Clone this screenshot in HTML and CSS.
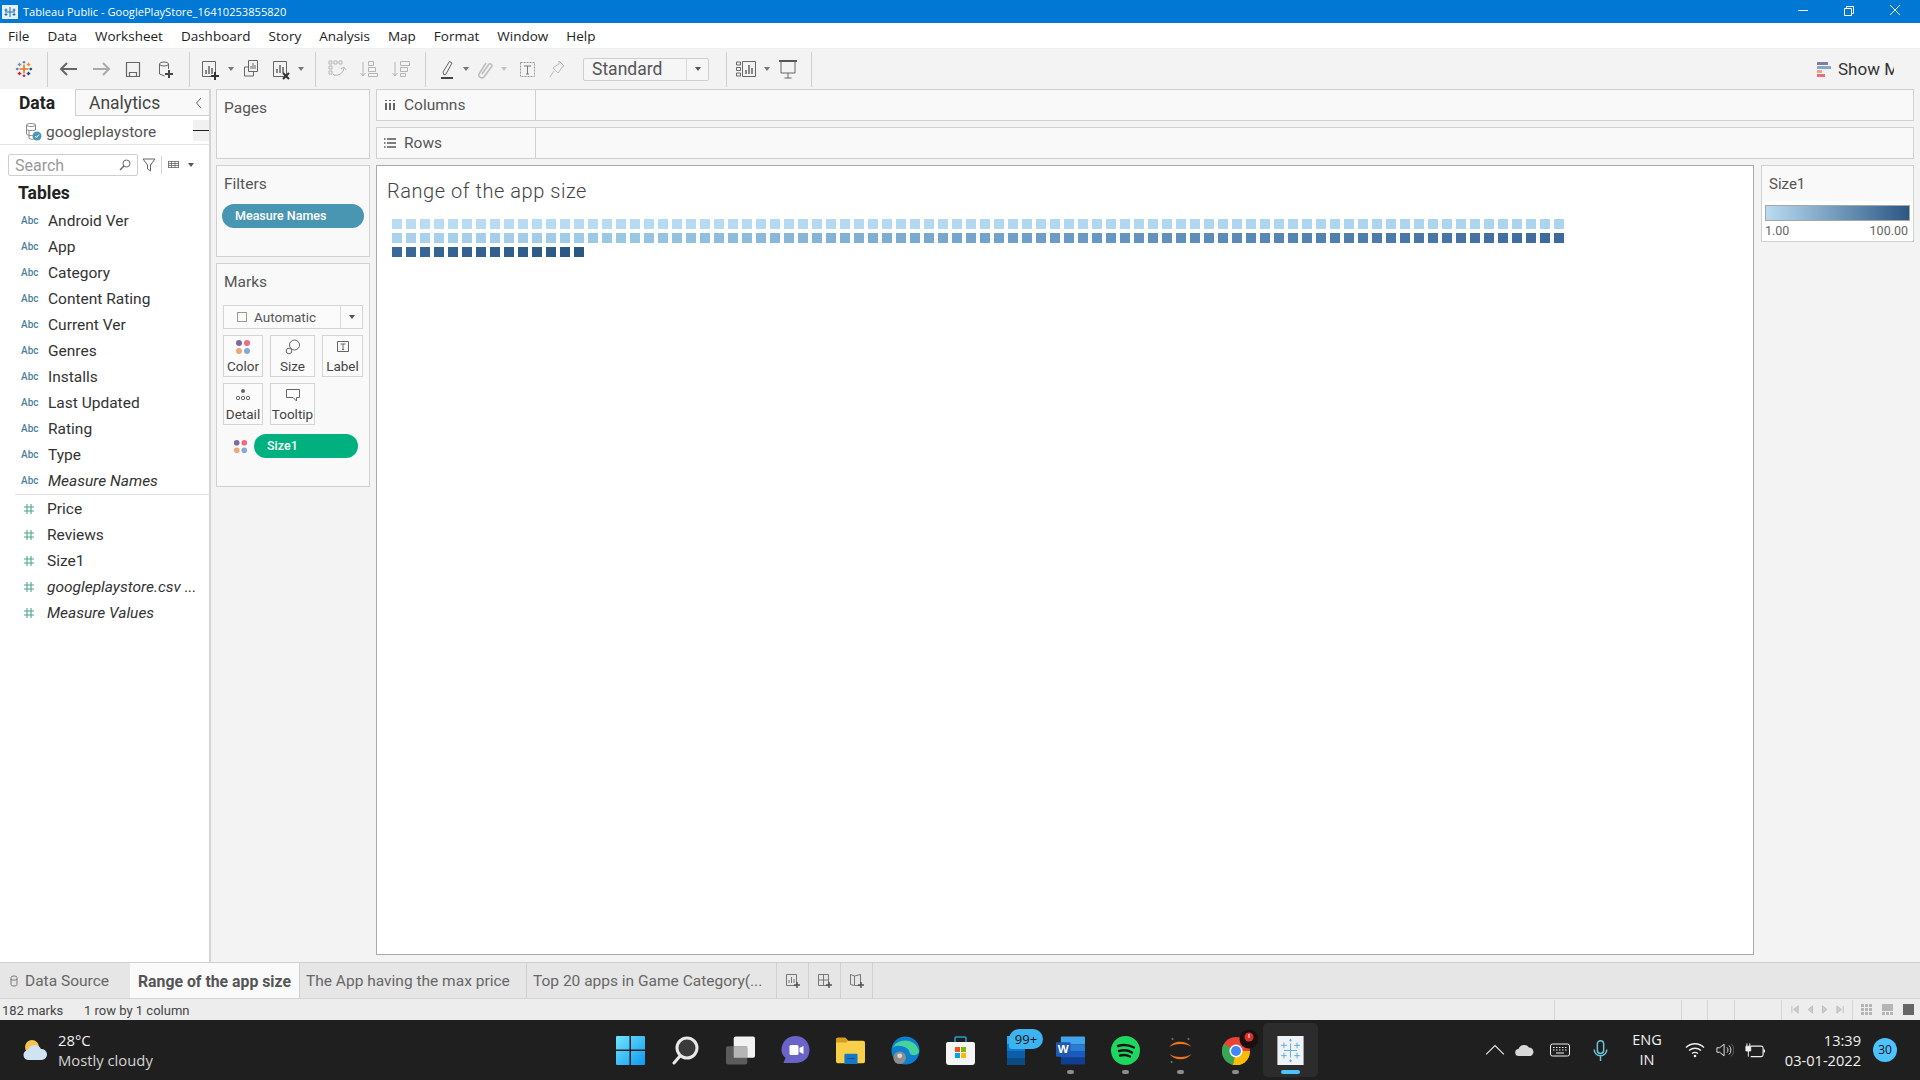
FILE: index.html
```html
<!DOCTYPE html>
<html lang="en">
<head>
    <meta charset="UTF-8">
    <title>Tableau Public - GooglePlayStore_16410253855820</title>
    <link rel="stylesheet" href="styles.css">
</head>
<body>
<svg class="defs" width="0" height="0">
    <symbol id="dots" viewBox="0 0 16 16">
        <circle cx="4" cy="4" r="3" fill="#7b6a9c"/><circle cx="12" cy="4" r="3" fill="#ee6a7c"/>
        <circle cx="4" cy="12" r="3" fill="#eda678"/><circle cx="12" cy="12" r="3" fill="#86a9d4"/>
    </symbol>
    <symbol id="num" viewBox="0 0 12 12">
        <path d="M4 1v10M8 1v10M1 4h10M1 8h10" stroke="#4da58a" stroke-width="1.1" fill="none"/>
    </symbol>
    <symbol id="logo" viewBox="0 0 20 20">
        <g fill="none" stroke-width="1.4">
            <path d="M10 5v10M5 10h10" stroke="#e8762c" stroke-width="1.8"/>
            <path d="M10 1v3M8.5 2.5h3" stroke="#5b879b"/>
            <path d="M10 16v3M8.5 17.5h3" stroke="#c72037"/>
            <path d="M2.5 8.5v3M1 10h3" stroke="#59879b"/>
            <path d="M17.5 8.5v3M16 10h3" stroke="#1f447a"/>
            <path d="M5 3v4M3 5h4" stroke="#7099a6"/>
            <path d="M15 3v4M13 5h4" stroke="#eb912b"/>
            <path d="M5 13v4M3 15h4" stroke="#c72037"/>
            <path d="M15 13v4M13 15h4" stroke="#1f447a"/>
        </g>
    </symbol>
</svg>

<div class="app">
    <header class="titlebar">
        <svg class="title-icon" viewBox="0 0 16 14"><rect width="16" height="14" fill="#e8f1fa"/><path d="M8 2v10M3 7h10M4 3.5v3M2.5 5h3M12 3.5v3M10.500 5h3M4 8v3M2.500 9.500h3M12 8v3M10.500 9.500h3" stroke="#1a6fb8" fill="none"/></svg>
        <span class="title-text">Tableau Public - GooglePlayStore_16410253855820</span>
        <div class="win-controls">
            <svg viewBox="0 0 46 23"><path d="M18 10.500h10" stroke="#fff" fill="none"/></svg>
            <svg viewBox="0 0 46 23"><path d="M18.500 8.500h7v7h-7zM20.500 8.500v-2h7v7h-2" stroke="#fff" fill="none"/></svg>
            <svg viewBox="0 0 46 23"><path d="M18 5l10 10M28 5L18 15" stroke="#fff" fill="none"/></svg>
        </div>
    </header>

    <nav class="menubar">
        <span>File</span><span>Data</span><span>Worksheet</span><span>Dashboard</span><span>Story</span><span>Analysis</span><span>Map</span><span>Format</span><span>Window</span><span>Help</span>
    </nav>

    <div class="toolbar">
        <div class="tool-group first">
            <svg class="tool" viewBox="0 0 32 20"><use href="#logo" x="7" y="1" width="18" height="18"/></svg>
        </div>
        <div class="tool-group g2">
            <svg class="tool" viewBox="0 0 32 20"><path d="M8 10h16M14 4l-6 6 6 6" stroke="#666" stroke-width="2" fill="none"/></svg>
            <svg class="tool" viewBox="0 0 32 20"><path d="M8 10h16M18 4l6 6-6 6" stroke="#aaa" stroke-width="2" fill="none"/></svg>
            <svg class="tool" viewBox="0 0 32 20"><path d="M9.500 3.500h13v14h-13zM12.500 17.500v-4h7v4" stroke="#666" stroke-width="1.200" fill="none"/></svg>
            <svg class="tool" viewBox="0 0 32 20"><path d="M10.500 5v10l5 2M10.500 5a4.500 2 0 0 1 9 0v5M10.500 5a4.500 2 0 0 0 9 0" stroke="#666" fill="none"/><path d="M20 11v8M16 15h8" stroke="#444" stroke-width="2" fill="none"/></svg>
        </div>
        <div class="tool-group g3">
            <svg class="tool" viewBox="0 0 32 20"><path d="M8.500 2.500h13v15h-13z" stroke="#666" fill="none"/><path d="M12 15v-4M15 15V7M18 15V9" stroke="#666" stroke-width="1.500"/><path d="M21 13v8M17 17h8" stroke="#333" stroke-width="2"/></svg>
            <span class="caret"></span>
            <svg class="tool n" viewBox="0 0 30 20"><path d="M12.500 1.500h9v11h-9zM8.500 8h4M8.500 8v9h9v-4" stroke="#666" fill="none"/><path d="M15 10V7M17 10V4M19 10V6" stroke="#666"/></svg>
            <svg class="tool n" viewBox="0 0 30 20"><path d="M7.500 2.500h13v15h-13z" stroke="#666" fill="none"/><path d="M11 14v-4M14 14V6M17 14V8" stroke="#666" stroke-width="1.500"/><path d="M17 14l6 6M23 14l-6 6" stroke="#333" stroke-width="2"/></svg>
            <span class="caret"></span>
        </div>
        <div class="tool-group g4 off">
            <svg class="tool" viewBox="0 0 32 20"><path d="M8 2h3v3H8zM13 2h3v3h-3zM18 2h3v3h-3zM8 7h3v3H8zM8 12h3v3H8zM13 16a8 8 0 0 0 10-7M20 10l3-2 2 3M12 15l2 2" stroke="#b5b5b5" fill="none"/></svg>
            <svg class="tool" viewBox="0 0 32 20"><path d="M10 3v14M7.500 14l2.500 3 2.500-3M15.500 2.500h5v4h-5zM15.500 8.500h7v4h-7zM15.500 14.500h9v3h-9z" stroke="#b5b5b5" fill="none"/></svg>
            <svg class="tool" viewBox="0 0 32 20"><path d="M10 3v14M7.500 14l2.500 3 2.500-3M15.500 2.500h9v4h-9zM15.500 8.500h7v4h-7zM15.500 14.500h5v3h-5z" stroke="#b5b5b5" fill="none"/></svg>
        </div>
        <div class="tool-group g5">
            <svg class="tool s" viewBox="0 0 28 22"><path d="M10 14l1 3 2-1 6-11-2.500-1.500z" stroke="#666" fill="none"/><path d="M8 20h12" stroke="#444" stroke-width="2"/></svg>
            <span class="caret"></span>
            <svg class="tool s" viewBox="0 0 28 22"><path d="M11 16l7-10a2 2 0 0 1 3 2l-8 11a3 3 0 0 1-5-3l7-11" stroke="#bbb" stroke-width="1.500" fill="none"/></svg>
            <span class="caret light"></span>
            <svg class="tool n text-tool" viewBox="0 0 30 20"><path d="M8.500 3.500h14v14h-14z" stroke="#999" stroke-dasharray="2 1" fill="none"/><path d="M12 7h7M15.500 7v8M14 15h3" stroke="#777" fill="none"/></svg>
            <svg class="tool n" viewBox="0 0 30 20"><path d="M17 2l5 5-2 1-3 5-1 1-5-5 1-1 5-3zM12 12l-4 6" stroke="#bbb" fill="none"/></svg>
            <div class="fit-select"><span>Standard</span><i class="fit-arrow"><b class="caret dark"></b></i></div>
        </div>
        <div class="tool-group g6">
            <svg class="tool s" viewBox="0 0 28 20"><path d="M2.500 3h4v3h-4zM2.500 8.500h4v3h-4zM2.500 14h4v3h-4zM8.500 2.500h13v15h-13z" stroke="#666" fill="none"/><path d="M12 15v-4M15 15V6M18 15V9" stroke="#666" stroke-width="1.500"/></svg>
            <span class="caret"></span>
            <svg class="tool" viewBox="0 0 32 22"><path d="M7 3h18" stroke="#555" stroke-width="2"/><path d="M9 3v12h14V3M16 15v5M12.500 20h7" stroke="#666" fill="none"/></svg>
        </div>
        <div class="show-me">
            <svg viewBox="0 0 14 15"><rect width="11" height="3" fill="#8b789f"/><rect y="4" width="14" height="3" fill="#84a6cf"/><rect y="8" width="5" height="3" fill="#eda678"/><rect y="12" width="8" height="3" fill="#ee6a7c"/></svg>
            <span class="show-text">Show Me</span>
        </div>
    </div>

    <main class="workspace">
        <aside class="data-pane">
            <div class="pane-tabs">
                <div class="pane-tab active">Data</div>
                <div class="pane-tab">Analytics<svg class="collapse" viewBox="0 0 8 12"><path d="M6 1L1.500 6 6 11" stroke="#666" fill="none"/></svg></div>
            </div>
            <div class="source-row">
                <svg class="source-icon" viewBox="0 0 18 20"><path d="M2.500 3v9c0 1.500 7 2 8 1M2.500 3c0-2 9-2 9 0s-9 2-9 0zM2.500 7c0 1.500 5 2 9 1M11.500 3v5M5 8v8c1 1.500 4 1.500 5 1" stroke="#888" fill="none"/><circle cx="13" cy="14" r="4.500" fill="#4b97b5"/><path d="M11 14l1.500 1.500 2.500-3" stroke="#fff" fill="none"/></svg>
                <span>googleplaystore</span>
                <span class="source-dash"><i></i></span>
            </div>
            <div class="search-row">
                <div class="search-box"><span>Search</span><svg viewBox="0 0 12 12"><circle cx="7.500" cy="4.500" r="3.500" stroke="#666" fill="none"/><path d="M5 7l-4 4" stroke="#666" stroke-width="1.500"/></svg></div>
                <svg class="filter-icon" viewBox="0 0 14 14"><path d="M1 1h12L8.500 7v6l-3-2V7z" stroke="#666" fill="none"/></svg>
                <i class="search-sep"></i>
                <svg class="list-icon" viewBox="0 0 11 10"><path d="M0 1.500h11M0 3.500h11M0 5.500h11M0 7.500h11M.500 1v7M3.500 1v7M7 1v7M10.500 1v7" stroke="#666" stroke-width=".8" fill="none"/></svg>
                <span class="caret dark"></span>
            </div>
            <h3 class="tables-head">Tables</h3>
            <ul class="field-list">
                <li><span class="abc">Abc</span>Android Ver</li>
                <li><span class="abc">Abc</span>App</li>
                <li><span class="abc">Abc</span>Category</li>
                <li><span class="abc">Abc</span>Content Rating</li>
                <li><span class="abc">Abc</span>Current Ver</li>
                <li><span class="abc">Abc</span>Genres</li>
                <li><span class="abc">Abc</span>Installs</li>
                <li><span class="abc">Abc</span>Last Updated</li>
                <li><span class="abc">Abc</span>Rating</li>
                <li><span class="abc">Abc</span>Type</li>
                <li class="gen"><span class="abc">Abc</span>Measure Names</li>
            </ul>
            <ul class="field-list measures">
                <li><svg class="hash"><use href="#num"/></svg>Price</li>
                <li><svg class="hash"><use href="#num"/></svg>Reviews</li>
                <li><svg class="hash"><use href="#num"/></svg>Size1</li>
                <li class="gen"><svg class="hash"><use href="#num"/></svg>googleplaystore.csv ...</li>
                <li class="gen"><svg class="hash"><use href="#num"/></svg>Measure Values</li>
            </ul>
        </aside>

        <section class="cards">
            <div class="card pages"><div class="card-title">Pages</div></div>
            <div class="card filters">
                <div class="card-title">Filters</div>
                <div class="pill pill-blue">Measure Names</div>
            </div>
            <div class="card marks-card">
                <div class="card-title">Marks</div>
                <div class="mark-type">
                    <i class="check"></i><span>Automatic</span>
                    <i class="type-arrow"><b class="caret dark"></b></i>
                </div>
                <div class="mark-btns">
                    <div class="mark-btn w40"><svg viewBox="0 0 16 16"><use href="#dots"/></svg>Color</div>
                    <div class="mark-btn w45"><svg viewBox="0 0 16 16"><circle cx="9.500" cy="6" r="5" stroke="#666" fill="none"/><circle cx="4" cy="12" r="2.800" stroke="#666" fill="#f9f9f9"/></svg>Size</div>
                    <div class="mark-btn w41"><svg viewBox="0 0 16 16"><path d="M2.500 2.500h11v10h-11z" stroke="#666" fill="none"/><path d="M5.500 5h5M8 5v5.500M7 10.500h2" stroke="#666" fill="none"/></svg>Label</div>
                </div>
                <div class="mark-btns">
                    <div class="mark-btn w40"><svg viewBox="0 0 16 16"><circle cx="8" cy="4" r="2" fill="#666"/><circle cx="3" cy="11" r="1.700" stroke="#666" fill="none"/><circle cx="8" cy="11" r="1.700" stroke="#666" fill="none"/><circle cx="13" cy="11" r="1.700" stroke="#666" fill="none"/></svg>Detail</div>
                    <div class="mark-btn w45"><svg viewBox="0 0 16 16"><path d="M1.500 2.500h13v8h-3v3.500l-3.500-3.500h-6.500z" stroke="#666" fill="none"/></svg>Tooltip</div>
                </div>
                <div class="mark-shelf">
                    <svg viewBox="0 0 16 16"><use href="#dots"/></svg>
                    <div class="pill pill-green">Size1</div>
                </div>
            </div>
        </section>

        <section class="content">
            <div class="shelf">
                <div class="shelf-label"><svg viewBox="0 0 12 12"><path d="M2 1v1M6 1v1M10 1v1M2 4v7M6 4v7M10 4v7" stroke="#555" stroke-width="1.800" fill="none"/></svg>Columns</div>
            </div>
            <div class="shelf">
                <div class="shelf-label"><svg viewBox="0 0 12 12"><path d="M0 2h1.500M3 2h9M0 6h1.500M3 6h9M0 10h1.500M3 10h9" stroke="#555" stroke-width="1.500" fill="none"/></svg>Rows</div>
            </div>
            <div class="view-row">
                <div class="view">
                    <h1 class="view-title">Range of the app size</h1>
                    <div class="marks-grid" id="marks"></div>
                </div>
                <div class="legend">
                    <div class="legend-title">Size1</div>
                    <div class="legend-bar"></div>
                    <div class="legend-scale"><span>1.00</span><span>100.00</span></div>
                </div>
            </div>
        </section>
    </main>

    <div class="sheet-tabs">
        <div class="sheet-tab source"><svg viewBox="0 0 8 12"><path d="M1 2.500v7c0 2 6 2 6 0v-7c0-2-6-2-6 0zM1 4c0 1.500 6 1.500 6 0" stroke="#777" fill="none"/></svg>Data Source</div>
        <div class="sheet-tab current">Range of the app size</div>
        <div class="sheet-tab app-price">The App having the max price</div>
        <div class="sheet-tab game">Top 20 apps in Game Category(...</div>
        <div class="sheet-tab add"><svg viewBox="0 0 16 16"><path d="M1.500 1.500h10v11h-10z" stroke="#777" fill="none"/><path d="M4 10V7M6.500 10V4M9 10V6" stroke="#777"/><path d="M12 9v6M9 12h6" stroke="#555" stroke-width="1.500"/></svg></div>
        <div class="sheet-tab add"><svg viewBox="0 0 16 16"><path d="M1.500 1.500h10v11h-10zM1.500 7h10M6.500 1.500V12" stroke="#777" fill="none"/><path d="M12 9v6M9 12h6" stroke="#555" stroke-width="1.500"/></svg></div>
        <div class="sheet-tab add"><svg viewBox="0 0 16 16"><path d="M1.500 1.500l4 1.500 6-1.500v11h-6l-4-1zM5.500 3v9" stroke="#777" fill="none"/><path d="M12 9v6M9 12h6" stroke="#555" stroke-width="1.500"/></svg></div>
    </div>

    <footer class="statusbar">
        <span class="stat-marks">182 marks</span>
        <span class="stat-size">1 row by 1 column</span>
        <div class="stat-cells">
            <i class="c127"></i><i class="c26"></i><i class="c27"></i><i class="c47"></i>
            <div class="nav-cell">
                <svg viewBox="0 0 60 10"><path d="M1 1v8M8 1L3 5l5 4zM24 1l-5 4 5 4zM35 1l5 4-5 4zM51 1l5 4-5 4zM58 1v8" stroke="#bbb" fill="#ccc"/></svg>
            </div>
            <div class="view-cell">
                <svg viewBox="0 0 11 11"><path d="M0 0h3v3H0zM4 0h3v3H4zM8 0h3v3H8zM0 4h3v3H0zM4 4h3v3H4zM8 4h3v3H8zM0 8h3v3H0zM4 8h3v3H4zM8 8h3v3H8z" fill="#b5b5b5"/></svg>
                <svg viewBox="0 0 11 11"><path d="M0 0h11v7H0zM0 8h3v3H0zM4 8h3v3H4zM8 8h3v3H8z" fill="#b5b5b5"/></svg>
                <svg viewBox="0 0 11 11"><path d="M0 0h11v11H0z" fill="#666"/></svg>
            </div>
        </div>
    </footer>

    <div class="taskbar">
        <div class="weather">
            <svg viewBox="0 0 26 24"><circle cx="10" cy="9" r="7" fill="#f5c44e"/><path d="M7 22a5 5 0 0 1-1-10 7 7 0 0 1 13-1 5.500 5.500 0 0 1 1 11z" fill="#cfe3f3"/></svg>
            <div class="weather-text"><span>28°C</span><span class="cond">Mostly cloudy</span></div>
        </div>
        <div class="tb-apps">
            <div class="tb-app"><svg viewBox="0 0 29 29"><defs><linearGradient id="win" x1="0" y1="0" x2="1" y2="1"><stop offset="0" stop-color="#74e3ff"/><stop offset="1" stop-color="#0a9bf0"/></linearGradient></defs><path d="M1 0h12.500v13.500H0V1a1 1 0 0 1 1-1zM15 0h13a1 1 0 0 1 1 1v12.500H15zM0 15h13.500v14H1a1 1 0 0 1-1-1zM15 15h14v13a1 1 0 0 1-1 1H15z" fill="url(#win)"/></svg></div>
            <div class="tb-app"><svg viewBox="0 0 29 29"><circle cx="16" cy="12" r="10" fill="#3a3a3a" stroke="#e8e8e8" stroke-width="3"/><path d="M9 20l-6 7" stroke="#e8e8e8" stroke-width="3" stroke-linecap="round"/></svg></div>
            <div class="tb-app"><svg viewBox="0 0 30 29"><rect x="8" width="22" height="22" rx="2" fill="#f2f2f2"/><rect y="10" width="22" height="19" rx="2" fill="#5f5f5f" opacity=".95"/><rect x="8" y="10" width="14" height="12" fill="#b5b5b5"/></svg></div>
            <div class="tb-app"><svg viewBox="0 0 28 29"><path d="M14 0c8 0 14 6 14 14s-6 13-14 13H2l2-5C1 19 0 17 0 14 0 6 6 0 14 0z" fill="#6b63c7"/><rect x="8" y="9" width="9" height="10" rx="1.500" fill="#fff"/><path d="M18 12l4-2v8l-4-2z" fill="#fff"/></svg></div>
            <div class="tb-app"><svg viewBox="0 0 31 29"><path d="M0 3a2 2 0 0 1 2-2h8l3 3h16a2 2 0 0 1 2 2v20a2 2 0 0 1-2 2H2a2 2 0 0 1-2-2z" fill="#f9cf4a"/><path d="M0 3a2 2 0 0 1 2-2h8l3 3-2 2H0z" fill="#d99c1c"/><rect x="9" y="18" width="14" height="11" rx="1" fill="#1478c9"/><path d="M12 23h8" stroke="#0b4d8a"/></svg></div>
            <div class="tb-app"><svg viewBox="0 0 30 29"><circle cx="15" cy="14.500" r="14.500" fill="#0c7fd0"/><path d="M2 12C5 2 25 0 29 15c0 5-9 6-10 1 0-5-14-9-17-4z" fill="#45d39a"/><circle cx="9" cy="22" r="6.500" fill="#8d8d8d"/><circle cx="9" cy="20" r="2.500" fill="#d8d8d8"/></svg></div>
            <div class="tb-app"><svg viewBox="0 0 29 29"><path d="M2 6h25a2 2 0 0 1 2 2v18a3 3 0 0 1-3 3H3a3 3 0 0 1-3-3V8a2 2 0 0 1 2-2z" fill="#f5f5f5"/><path d="M9 6V2a1 1 0 0 1 1-1h9a1 1 0 0 1 1 1v4" stroke="#21a0d8" stroke-width="1.500" fill="none"/><path d="M9 11h5v5H9z" fill="#f25022"/><path d="M15 11h5v5h-5z" fill="#7fba00"/><path d="M9 17h5v5H9z" fill="#00a4ef"/><path d="M15 17h5v5h-5z" fill="#ffb900"/></svg></div>
            <div class="tb-app"><svg class="todo" viewBox="0 0 18 29"><rect width="18" height="8" fill="#28a8ea"/><rect y="8" width="18" height="7" fill="#0f78d4"/><rect y="15" width="18" height="7" fill="#0d5ea8"/><rect y="22" width="18" height="7" fill="#0a4a85"/></svg><span class="badge-99">99+</span></div>
            <div class="tb-app dot"><svg viewBox="0 0 30 29"><rect x="5" width="25" height="8" rx="1" fill="#41a5ee"/><rect x="5" y="8" width="25" height="7" fill="#2b7cd3"/><rect x="5" y="15" width="25" height="7" fill="#185abd"/><rect x="5" y="22" width="25" height="7" rx="1" fill="#103f91"/><rect y="6" width="15" height="15" rx="1" fill="#1d59b5"/><text class="word-w" x="7.500" y="17.500" text-anchor="middle">W</text></svg></div>
            <div class="tb-app dot"><svg viewBox="0 0 29 29"><circle cx="14.500" cy="14.500" r="14.500" fill="#1ed760"/><path d="M7 10c5-1.500 11-1 16 1.500M8 15c4-1 9-1 13 1.500M9 19.500c3.500-.8 7-.5 10 1" stroke="#191414" stroke-width="2.400" stroke-linecap="round" fill="none"/></svg></div>
            <div class="tb-app dot"><svg viewBox="0 0 28 29"><path d="M3 11C7 4 20 4 25 11 20 7 8 7 3 11zM3 18c5 7 17 7 22 0-5 4-17 4-22 0z" fill="#e9761d"/><circle cx="6" cy="3" r="1" fill="#777"/><circle cx="22" cy="3" r="1" fill="#777"/><circle cx="5" cy="26" r="1" fill="#777"/></svg></div>
            <div class="tb-app dot"><svg class="chrome" viewBox="0 0 38 36"><circle cx="14" cy="22" r="14" fill="#ea4335"/><path d="M14 22L2 15a14 14 0 0 0 9 21z" fill="#34a853"/><path d="M14 22h14a14 14 0 0 1-17 14z" fill="#fbbc04"/><circle cx="14" cy="22" r="6.500" fill="#fff"/><circle cx="14" cy="22" r="5" fill="#4285f4"/><circle cx="27" cy="10" r="9.500" fill="#1a1010"/><circle cx="27" cy="8" r="4.500" fill="#d8322f"/><path d="M27 5v4" stroke="#fff"/></svg></div>
            <div class="tb-app active"><svg viewBox="0 0 28 31"><rect width="28" height="31" fill="#eef3f7"/><path d="M14 8v15M7 15.500h14M7 7v6M4 10h6M21 7v6M18 10h6M7 18v6M4 21h6M21 18v6M18 21h6M14 3v3M12.500 4.500h3M14 25v3M12.500 26.500h3" stroke="#5fa8d8" fill="none"/></svg></div>
        </div>
        <div class="tray">
            <div class="tray-item w30"><svg viewBox="0 0 18 10"><path d="M1 9l8-8 8 8" stroke="#e8e8e8" fill="none"/></svg></div>
            <div class="tray-item w30"><svg viewBox="0 0 20 12"><path d="M4 12a3.500 3.500 0 0 1-.5-7A6 6 0 0 1 14 3.500 4.500 4.500 0 0 1 16 12z" fill="#d8d8d8"/></svg></div>
            <div class="tray-item w40"><svg viewBox="0 0 20 13"><rect x=".5" y=".5" width="19" height="12" rx="2" stroke="#f0f0f0" fill="none"/><path d="M3 4h14M3 6.500h14" stroke="#f0f0f0" stroke-dasharray="1.500 1.500"/><path d="M6 9.500h8" stroke="#f0f0f0"/></svg></div>
            <div class="tray-item w40"><svg class="mic" viewBox="0 0 14 20"><rect x="4" y=".8" width="6" height="12" rx="3" stroke="#6cc5dc" stroke-width="1.400" fill="none"/><path d="M1 9a6 6 0 0 0 12 0M7 15v5" stroke="#6cc5dc" stroke-width="1.400" fill="none"/></svg></div>
            <div class="tray-lang"><span>ENG</span><span>IN</span></div>
            <div class="tray-item w42"><svg viewBox="0 0 20 15"><path d="M1 5c5-5 13-5 18 0M4 8c3.500-3 8.500-3 12 0M7 11c2-1.500 4-1.500 6 0" stroke="#f0f0f0" stroke-width="1.300" fill="none"/><circle cx="10" cy="13.500" r="1.300" fill="#f0f0f0"/></svg></div>
            <div class="tray-item w18"><svg viewBox="0 0 20 16"><path d="M1 5.500h3L9 1.500v13l-5-4H1z" stroke="#f0f0f0" fill="none"/><path d="M12 5a4 4 0 0 1 0 6M14.500 3a7 7 0 0 1 0 10" stroke="#f0f0f0" fill="none"/><path d="M17 1a10 10 0 0 1 0 14" stroke="#666" fill="none"/></svg></div>
            <div class="tray-item w42"><svg viewBox="0 0 21 16"><path d="M6 4h11a2 2 0 0 1 2 2v7a2 2 0 0 1-2 2H6" stroke="#f0f0f0" stroke-width="1.200" fill="none"/><path d="M19.500 7.500h1.500v3h-1.500z" fill="#f0f0f0"/><path d="M1 4h5v5H1zM2 1v3M5 1v3M3.500 9v6" stroke="#f0f0f0" fill="#f0f0f0"/></svg></div>
            <div class="clock"><span>13:39</span><span>03-01-2022</span></div>
            <div class="notif">30</div>
        </div>
    </div>
</div>
<script src="marks.js"></script>
</body>
</html>
```

FILE: styles.css
```css
* {
    box-sizing: border-box;
}
html, body {
    margin: 0;
    padding: 0;
}
body {
    font-family: Roboto, "Liberation Sans", sans-serif;
    color: #333;
    background: #f3f3f3;
}
.defs {
    position: absolute;
}
.app {
    width: 1920px;
    height: 1080px;
    display: flex;
    flex-direction: column;
    overflow: hidden;
}

/* title + menu */
.titlebar {
    height: 23px;
    background: #0078d4;
    color: #fff;
    display: flex;
    align-items: center;
    padding-left: 2px;
    flex: none;
}
.title-icon {
    width: 16px;
    height: 14px;
    margin-right: 5px;
}
.title-text {
    font-family: "Open Sans", sans-serif;
    font-size: 11.1px;
}
.win-controls {
    margin-left: auto;
    display: flex;
    padding-right: 2px;
}
.win-controls svg {
    width: 46px;
    height: 23px;
    display: block;
}
.menubar {
    height: 25px;
    flex: none;
    background: #fff;
    display: flex;
    align-items: center;
    padding-left: 8px;
    gap: 18px;
    font-family: "Open Sans", sans-serif;
    font-size: 13.5px;
    color: #222;
}

/* toolbar */
.toolbar {
    height: 41px;
    flex: none;
    background: #f3f3f3;
    border-top: 1px solid #efefef;
    display: flex;
    align-items: center;
}
.tool-group {
    height: 35px;
    display: flex;
    align-items: center;
    border-left: 1px solid #cfcfcf;
    flex: none;
}
.tool-group.first {
    border-left: 0;
    width: 47px;
    padding-left: 8px;
}
.g2 { width: 142px; padding-left: 5px; }
.g3 { width: 126px; padding-left: 4px; }
.g4 { width: 110px; padding-left: 5px; }
.g5 { width: 301px; padding-left: 7px; }
.g6 { width: 86px; padding-left: 7px; border-right: 1px solid #cfcfcf; }
.tool {
    width: 32px;
    height: 22px;
    flex: none;
}
.tool.n { width: 30px; }
.tool.s { width: 28px; }
.tool.text-tool { margin-left: 3px; }
.caret {
    width: 10px;
    flex: none;
    position: relative;
    height: 4px;
    display: block;
}
.caret::after {
    content: "";
    position: absolute;
    left: 2px;
    top: 0;
    border-left: 3px solid transparent;
    border-right: 3px solid transparent;
    border-top: 4px solid #777;
}
.caret.light::after { border-top-color: #c4c4c4; }
.caret.dark::after { border-top-color: #555; }
.fit-select {
    margin-left: 11px;
    width: 126px;
    height: 23px;
    border: 1px solid #cfcfcf;
    border-radius: 2px;
    display: flex;
    align-items: center;
    font-size: 17.5px;
    color: #555;
    background: #f6f6f6;
}
.fit-select span {
    flex: 1;
    padding-left: 8px;
}
.fit-arrow {
    width: 22px;
    height: 100%;
    border-left: 1px solid #d8d8d8;
    display: flex;
    align-items: center;
    justify-content: center;
}
.show-me {
    margin-left: auto;
    width: 103px;
    display: flex;
    align-items: center;
    overflow: hidden;
}
.show-me svg {
    width: 14px;
    height: 15px;
    margin-right: 7px;
    flex: none;
}
.show-text {
    display: block;
    width: 56px;
    overflow: hidden;
    white-space: nowrap;
    font-size: 17px;
    color: #333;
    flex: none;
}

/* main area */
.workspace {
    flex: 1;
    min-height: 0;
    display: flex;
    background: #f3f3f3;
}
.data-pane {
    width: 211px;
    flex: none;
    background: #fff;
    border-right: 2px solid #d4d4d4;
}
.pane-tabs {
    height: 27px;
    display: flex;
    background: #fff;
}
.pane-tab {
    font-size: 17.5px;
    display: flex;
    align-items: center;
    color: #444;
    flex: 1;
    padding-left: 13px;
    background: #f9f9f9;
    border-bottom: 1px solid #cfcfcf;
    border-top: 1px solid #cfcfcf;
    justify-content: space-between;
    padding-right: 6px;
}
.pane-tab.active {
    flex: none;
    width: 76px;
    padding-left: 19px;
    font-weight: 700;
    color: #222;
    background: #fff;
    border-bottom: 0;
    border-top: 0;
    border-right: 1px solid #cfcfcf;
}
.collapse {
    width: 8px;
    height: 12px;
}
.source-row {
    height: 29px;
    display: flex;
    align-items: center;
    padding: 4px 0 0 24px;
    font-size: 15.5px;
    color: #555;
    border-bottom: 1px solid #e4e4e4;
}
.source-icon {
    width: 18px;
    height: 20px;
    margin-right: 4px;
}
.source-dash {
    margin-left: auto;
    width: 16px;
    height: 21px;
    background: #f1f1f1;
    display: flex;
    align-items: center;
    margin-top: -4px;
}
.source-dash i {
    display: block;
    width: 100%;
    height: 1px;
    background: #222;
}
.search-row {
    height: 31px;
    display: flex;
    align-items: center;
    padding: 8px 0 0 8px;
}
.search-box {
    width: 130px;
    height: 22px;
    border: 1px solid #cfcfcf;
    border-radius: 2px;
    display: flex;
    align-items: center;
    padding: 1px 6px 0;
    font-size: 16px;
    color: #999;
}
.search-box span {
    flex: 1;
}
.search-box svg {
    width: 12px;
    height: 12px;
}
.filter-icon {
    width: 14px;
    height: 14px;
    margin-left: 4px;
}
.search-sep {
    width: 1px;
    height: 18px;
    background: #d4d4d4;
    margin-left: 5px;
}
.list-icon {
    width: 11px;
    height: 10px;
    margin: 0 7px 0 6px;
}
.tables-head {
    margin: 0;
    padding-left: 18px;
    height: 31.5px;
    line-height: 34px;
    font-size: 17.5px;
    font-weight: 700;
    color: #222;
}
.field-list {
    list-style: none;
    margin: 0;
    padding: 0;
}
.field-list li {
    height: 26px;
    display: flex;
    align-items: center;
    font-size: 15.5px;
    color: #333;
    white-space: nowrap;
}
.field-list li.gen {
    font-style: italic;
}
.measures::before {
    content: "";
    display: block;
    height: 1px;
    background: #e2e2e2;
    margin: 0 0 1px 15px;
}
.abc {
    width: 48px;
    padding-left: 21px;
    font-size: 10px;
    font-weight: 500;
    font-style: normal;
    color: #4e7f9c;
}
.hash {
    width: 12px;
    height: 12px;
    margin: 0 12px 0 23px;
    flex: none;
}

/* pages, filters, marks */
.cards {
    width: 154px;
    margin-left: 5px;
    flex: none;
    display: flex;
    flex-direction: column;
}
.card {
    background: #f9f9f9;
    border: 1px solid #d0d0d0;
}
.card-title {
    font-size: 15.5px;
    color: #555;
    height: 35px;
    padding: 9px 0 0 7px;
    line-height: 18px;
}
.pages {
    height: 70px;
}
.filters {
    height: 92px;
    margin-top: 6px;
}
.marks-card {
    height: 224px;
    margin-top: 6px;
}
.pill {
    height: 24px;
    line-height: 24px;
    border-radius: 12px;
    color: #fff;
    font-size: 12.5px;
    font-weight: 500;
}
.pill-blue {
    background: #4996b2;
    width: 142px;
    margin: 3px 0 0 5px;
    padding-left: 13px;
}
.pill-green {
    background: #00b180;
    width: 104px;
    padding-left: 13px;
}
.mark-type {
    height: 24px;
    margin: 6px 0 0 6px;
    width: 140px;
    border: 1px solid #d4d4d4;
    display: flex;
    align-items: center;
    font-size: 13.5px;
    color: #555;
    background: #fbfbfb;
}
.check {
    width: 10px;
    height: 10px;
    border: 1px solid #999;
    margin: 0 7px 0 13px;
}
.type-arrow {
    margin-left: auto;
    width: 22px;
    height: 100%;
    border-left: 1px solid #d8d8d8;
    display: flex;
    align-items: center;
    justify-content: center;
}
.mark-btns {
    display: flex;
    gap: 7px;
    margin: 6px 0 0 6px;
}
.mark-btn {
    height: 42px;
    border: 1px solid #d4d4d4;
    background: #fbfbfb;
    display: flex;
    flex-direction: column;
    align-items: center;
    font-size: 13.5px;
    color: #444;
    padding-top: 3px;
    line-height: 17px;
}
.mark-btn svg {
    width: 16px;
    height: 16px;
    flex: none;
    margin-bottom: 3px;
}
.w40 { width: 40px; }
.w45 { width: 45px; }
.w41 { width: 41px; }
.mark-shelf {
    display: flex;
    align-items: center;
    margin: 9px 0 0 16px;
}
.mark-shelf svg {
    width: 15px;
    height: 15px;
    margin-right: 6px;
}

/* shelves + view */
.content {
    flex: none;
    width: 1538px;
    margin-left: 6px;
    display: flex;
    flex-direction: column;
    padding-bottom: 7px;
}
.shelf {
    height: 32px;
    margin-bottom: 6px;
    background: #f9f9f9;
    border: 1px solid #d0d0d0;
    display: flex;
}
.shelf-label {
    width: 159px;
    border-right: 1px solid #d0d0d0;
    display: flex;
    align-items: center;
    padding-left: 7px;
    font-size: 15.5px;
    color: #555;
}
.shelf-label svg {
    width: 12px;
    height: 12px;
    margin-right: 8px;
}
.view-row {
    flex: 1;
    min-height: 0;
    display: flex;
    gap: 7px;
}
.view {
    width: 1378px;
    background: #fff;
    border: 1px solid #aaa;
    padding: 12px 0 0 10px;
}
.view-title {
    margin: 0;
    font-weight: 300;
    font-size: 20px;
    letter-spacing: 0.55px;
    line-height: 26px;
    color: #444;
}
.marks-grid {
    display: grid;
    grid-template-columns: repeat(84, 10px);
    grid-auto-rows: 10px;
    gap: 4px;
    margin: 15px 0 0 5px;
}
.legend {
    width: 153px;
    height: 77px;
    background: #fff;
    border: 1px solid #d0d0d0;
}
.legend-title {
    height: 35px;
    background: #f9f9f9;
    font-size: 15px;
    color: #555;
    padding: 9px 0 0 7px;
}
.legend-bar {
    height: 16px;
    margin: 4px 3px 0 3px;
    border: 1px solid #a8a8a0;
    background: linear-gradient(90deg, #b9dcf2, #2b5783);
}
.legend-scale {
    display: flex;
    justify-content: space-between;
    padding: 2px 5px 2px 3px;
    font-size: 12.5px;
    color: #666;
}

/* bottom tabs + status */
.sheet-tabs {
    height: 37px;
    flex: none;
    display: flex;
    background: #e6e6e6;
    border-top: 1px solid #cfcfcf;
    border-bottom: 1px solid #d4d4d4;
}
.sheet-tab {
    display: flex;
    align-items: center;
    font-size: 15.5px;
    color: #666;
    white-space: nowrap;
    border-right: 1px solid #d0d0d0;
    padding: 1px 0 0 6px;
}
.sheet-tab.source {
    width: 130px;
    padding-left: 10px;
    border-right: 0;
}
.sheet-tab.source svg {
    width: 8px;
    height: 12px;
    margin-right: 7px;
}
.sheet-tab.current {
    width: 170px;
    background: #fafafa;
    font-weight: 700;
    font-size: 15.8px;
    color: #555;
    padding-left: 8px;
}
.sheet-tab.app-price { width: 227px; }
.sheet-tab.game { width: 250px; }
.sheet-tab.add {
    width: 32px;
    justify-content: center;
    padding: 0;
}
.sheet-tab.add svg {
    width: 16px;
    height: 16px;
}
.statusbar {
    height: 21px;
    flex: none;
    background: #ededed;
    display: flex;
    align-items: center;
    font-size: 13px;
    color: #444;
    padding-top: 1px;
}
.stat-marks {
    width: 84px;
    padding-left: 2px;
}
.stat-cells {
    margin-left: auto;
    display: flex;
    height: 100%;
    margin-top: -1px;
}
.stat-cells i {
    display: block;
    border-left: 1px solid #d4d4d4;
}
.c127 { width: 127px; }
.c26 { width: 26px; }
.c27 { width: 27px; }
.c47 { width: 47px; }
.nav-cell {
    width: 71px;
    border-left: 1px solid #d4d4d4;
    display: flex;
    align-items: center;
    padding-left: 5px;
}
.nav-cell svg {
    width: 62px;
    height: 9px;
}
.view-cell {
    width: 68px;
    border-left: 1px solid #d4d4d4;
    display: flex;
    align-items: center;
    gap: 10px;
    padding-left: 8px;
}
.view-cell svg {
    width: 11px;
    height: 11px;
}

/* windows taskbar */
.taskbar {
    height: 60px;
    flex: none;
    background: #1f1f1f;
    display: flex;
    align-items: center;
    color: #f0f0f0;
}
.weather {
    width: 603px;
    flex: none;
    display: flex;
    align-items: center;
    padding-left: 22px;
    gap: 10px;
}
.weather svg {
    width: 26px;
    height: 24px;
}
.weather-text {
    display: flex;
    flex-direction: column;
    font-family: "Open Sans", sans-serif;
    font-size: 14.8px;
    line-height: 20px;
}
.cond {
    color: #d4d4d4;
}
.tb-apps {
    display: flex;
    height: 100%;
}
.tb-app {
    width: 55px;
    height: 100%;
    position: relative;
    display: flex;
    align-items: center;
    justify-content: center;
}
.tb-app svg {
    width: 29px;
    height: 29px;
}
.tb-app svg.todo {
    width: 18px;
}
.tb-app svg.chrome {
    width: 38px;
    height: 36px;
    margin: 0 0 6px 11px;
}
.badge-99 {
    position: absolute;
    top: 9px;
    left: 21px;
    width: 34px;
    height: 20px;
    border-radius: 10px 10px 10px 3px;
    background: #3db4f2;
    color: #111;
    font-family: "Open Sans", sans-serif;
    font-size: 13px;
    line-height: 20px;
    text-align: center;
}
.word-w {
    font-family: "Liberation Sans", sans-serif;
    font-size: 12px;
    font-weight: 700;
    fill: #fff;
}
.tb-app.dot::after {
    content: "";
    position: absolute;
    left: 24px;
    bottom: 6px;
    width: 7px;
    height: 4px;
    border-radius: 2px;
    background: #8c8c8c;
}
.tb-app.active {
    background: #2c2c2c;
    border-radius: 5px;
    margin: 3px 0;
    height: 54px;
}
.tb-app.active::after {
    content: "";
    position: absolute;
    left: 18px;
    bottom: 3px;
    width: 19px;
    height: 4px;
    border-radius: 2px;
    background: #4cc2ff;
}
.tray {
    margin-left: auto;
    display: flex;
    align-items: center;
    padding-right: 23px;
}
.tray-item {
    display: flex;
    justify-content: center;
    align-items: center;
}
.w30 { width: 30px; }
.w40.tray-item { width: 40px; }
.w42 { width: 42px; }
.w18 { width: 18px; }
.tray-item svg {
    width: 20px;
    height: 16px;
}
.tray-item svg.mic {
    width: 15px;
    height: 21px;
}
.tray-lang {
    width: 54px;
    display: flex;
    flex-direction: column;
    align-items: center;
    font-family: "Open Sans", sans-serif;
    font-size: 14.5px;
    line-height: 20px;
}
.clock {
    width: 85px;
    display: flex;
    flex-direction: column;
    align-items: flex-end;
    font-family: "Open Sans", sans-serif;
    font-size: 14.6px;
    line-height: 20px;
}
.notif {
    width: 24px;
    height: 24px;
    margin-left: 12px;
    border-radius: 50%;
    background: #4cc2ff;
    color: #111;
    font-family: "Open Sans", sans-serif;
    font-size: 12px;
    line-height: 24px;
    text-align: center;
}
```

FILE: marks.js
```js
// one square per mark, 182 in all: 84 + 84 + 14
var rows = [
    { count: 84, stops: [[0, [185, 220, 242]], [83, [172, 212, 238]]] },
    { count: 84, stops: [[0, [170, 210, 236]], [13, [158, 203, 231]], [48, [105, 155, 198]], [83, [60, 106, 155]]] },
    { count: 14, stops: [[0, [58, 104, 152]], [13, [43, 87, 131]]] }
];

function colorAt(stops, i) {
    for (var s = 1; s < stops.length; s++) {
        if (i <= stops[s][0]) {
            var a = stops[s - 1], b = stops[s];
            var t = (i - a[0]) / (b[0] - a[0]);
            var c = a[1].map(function (v, k) { return Math.round(v + (b[1][k] - v) * t); });
            return "rgb(" + c.join(",") + ")";
        }
    }
}

var grid = document.getElementById("marks");
rows.forEach(function (row) {
    for (var i = 0; i < row.count; i++) {
        var mark = document.createElement("span");
        mark.style.background = colorAt(row.stops, i);
        grid.appendChild(mark);
    }
});
```
